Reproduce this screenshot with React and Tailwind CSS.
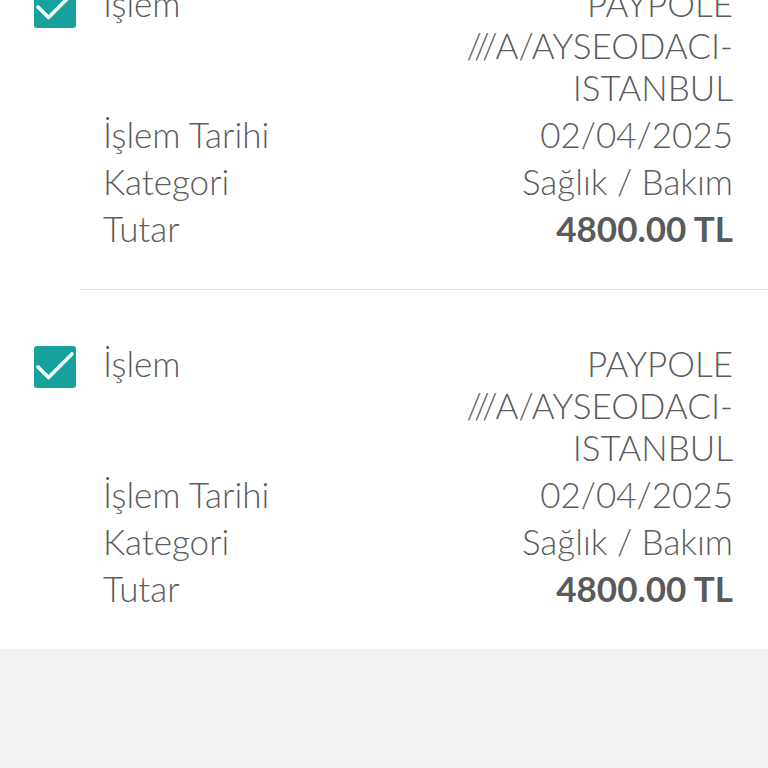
import React from 'react';

// Satır: solda etiket, sağda değer
const Row = ({ label, children, bold = false }) => (
  <div className="flex justify-between gap-6">
    <span className="shrink-0">{label}</span>
    <span className={`text-right ${bold ? 'font-bold text-[#5a5a5a]' : ''}`}>
      {children}
    </span>
  </div>
);

const Checkbox = () => (
  <div className="mt-1 w-[42px] h-[42px] shrink-0 rounded-[3px] bg-[#17a19d] flex">
    <svg width="42" height="42" viewBox="0 0 42 42" fill="none">
      <path
        d="M4 21 L14.5 31.5 L38 8"
        stroke="white"
        strokeWidth="3.6"
        strokeLinecap="round"
        strokeLinejoin="round"
      />
    </svg>
  </div>
);

const Islem = ({ item }) => (
  <div className="flex pl-[34px] pr-[35px] pt-[52px] pb-[40px]">
    <Checkbox />
    <div className="flex-1 ml-[27px] flex flex-col gap-[5px]">
      <Row label="İşlem">
        {item.aciklama.map((l) => (
          <span key={l} className="block">{l}</span>
        ))}
      </Row>
      <Row label="İşlem Tarihi">{item.tarih}</Row>
      <Row label="Kategori">{item.kategori}</Row>
      <Row label="Tutar" bold>{item.tutar}</Row>
    </div>
  </div>
);

const islemler = [
  {
    aciklama: ['PAYPOLE', '///A/AYSEODACI-', 'ISTANBUL'],
    tarih: '02/04/2025',
    kategori: 'Sağlık / Bakım',
    tutar: '4800.00 TL',
  },
  {
    aciklama: ['PAYPOLE', '///A/AYSEODACI-', 'ISTANBUL'],
    tarih: '02/04/2025',
    kategori: 'Sağlık / Bakım',
    tutar: '4800.00 TL',
  },
];

export default function App() {
  return (
    <div className="w-[768px] h-[768px] overflow-hidden bg-[#f2f2f2] text-[#5c5c5c] font-['Lato',sans-serif] font-light text-[35px] leading-[42px]">
      <div className="bg-white -mt-[70px]">
        {islemler.map((item, i) => (
          <div key={i}>
            {i > 0 && <div className="ml-[80px] h-px bg-[#e3e3e3]" />}
            <Islem item={item} />
          </div>
        ))}
      </div>
    </div>
  );
}
